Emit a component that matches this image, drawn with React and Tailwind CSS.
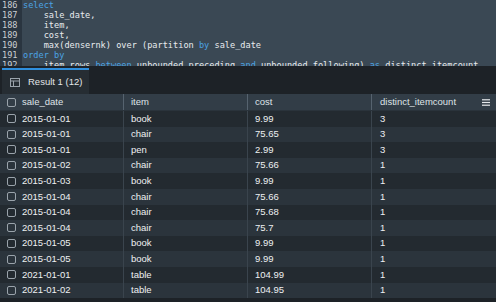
import React from 'react';

const code = [
  [186, [['k', 'select']]],
  [187, [['t', '    sale_date,']]],
  [188, [['t', '    item,']]],
  [189, [['t', '    cost,']]],
  [190, [['t', '    max(densernk) over (partition '], ['k', 'by'], ['t', ' sale_date']]],
  [191, [['k', 'order by']]],
  [192, [['t', '    item rows '], ['k', 'between'], ['t', ' unbounded preceding '], ['k', 'and'], ['t', ' unbounded following) '], ['k', 'as'], ['t', ' distinct_itemcount']]],
];

const rows = [
  ['2015-01-01', 'book', '9.99', '3'],
  ['2015-01-01', 'chair', '75.65', '3'],
  ['2015-01-01', 'pen', '2.99', '3'],
  ['2015-01-02', 'chair', '75.66', '1'],
  ['2015-01-03', 'book', '9.99', '1'],
  ['2015-01-04', 'chair', '75.66', '1'],
  ['2015-01-04', 'chair', '75.68', '1'],
  ['2015-01-04', 'chair', '75.7', '1'],
  ['2015-01-05', 'book', '9.99', '1'],
  ['2015-01-05', 'book', '9.99', '1'],
  ['2021-01-01', 'table', '104.99', '1'],
  ['2021-01-02', 'table', '104.95', '1'],
];

const Check = () => (
  <span className="w-[9px] h-[9px] rounded-[2px] border border-[#9aa3ab] shrink-0" />
);

export default function App() {
  return (
    <div className="w-[496px] h-[302px] overflow-hidden bg-[#1d2227] flex flex-col text-[#e6e9ec]" style={{ fontFamily: '"Liberation Sans", Arial, sans-serif' }}>
      {/* editor */}
      <div className="h-[66px] flex overflow-hidden bg-[#3a4854] shrink-0" style={{ fontFamily: '"DejaVu Sans Mono", monospace' }}>
        <div className="w-[22px] bg-[#2a3540] text-[#c9ced3] text-[8.6px] leading-[10px] pl-[2px] shrink-0">
          {code.map(([n]) => <div key={n}>{n}</div>)}
        </div>
        <div className="text-[8.6px] leading-[10px] pl-[1px] whitespace-pre text-[#e8ebee]">
          {code.map(([n, parts]) => (
            <div key={n}>
              {parts.map(([k, s], i) => (
                <span key={i} className={k === 'k' ? 'text-[#4ba3e3]' : ''}>{s}</span>
              ))}
            </div>
          ))}
        </div>
      </div>

      {/* result tabs */}
      <div className="h-[28px] flex shrink-0 bg-[#1d2227] pt-[2px]">
        <div className="w-[87px] ml-[2px] bg-[#262d33] border-t-2 border-[#2f8fdd] flex items-center gap-[8px] pl-[8px] text-[9.5px] text-[#e3e6e9]">
          <svg width="10" height="9" viewBox="0 0 10 9" fill="none" stroke="#9aa3ab" strokeWidth="1">
            <rect x="0.5" y="0.5" width="9" height="8" />
            <line x1="0.5" y1="3" x2="9.5" y2="3" />
            <line x1="3.5" y1="3" x2="3.5" y2="8.5" />
          </svg>
          <span>Result 1 (12)</span>
        </div>
      </div>

      {/* header */}
      <div className="h-[17px] flex shrink-0 bg-[#323d47] text-[9.5px] text-[#dfe3e7] border-b border-[#2a333b]">
        <div className="w-[124px] flex items-center gap-[6px] pl-[7px] border-r border-[#56636f]">
          <Check />
          <span>sale_date</span>
        </div>
        <div className="w-[124px] flex items-center pl-[7px] border-r border-[#56636f]">item</div>
        <div className="w-[124px] flex items-center pl-[7px] border-r border-[#56636f]">cost</div>
        <div className="flex-1 flex items-center justify-between pl-[8px] pr-[6px]">
          <span>distinct_itemcount</span>
          <svg width="8" height="7" viewBox="0 0 8 7" stroke="#e6e9ec" strokeWidth="1.2">
            <line x1="0" y1="0.8" x2="8" y2="0.8" />
            <line x1="0" y1="3.5" x2="8" y2="3.5" />
            <line x1="0" y1="6.2" x2="8" y2="6.2" />
          </svg>
        </div>
      </div>

      {/* rows */}
      <div className="flex flex-col text-[9.5px] text-[#eef0f2]">
        {rows.map((r, i) => (
          <div key={i} className={`h-[15.6px] flex ${i % 2 === 0 ? 'bg-[#232a30]' : 'bg-[#2b343c]'}`}>
            <div className="w-[124px] flex items-center gap-[6px] pl-[7px] border-r border-[#3a444d]">
              <Check />
              <span>{r[0]}</span>
            </div>
            <div className="w-[124px] flex items-center pl-[7px] border-r border-[#3a444d]">{r[1]}</div>
            <div className="w-[124px] flex items-center pl-[7px] border-r border-[#3a444d]">{r[2]}</div>
            <div className="flex-1 flex items-center pl-[8px]">{r[3]}</div>
          </div>
        ))}
      </div>
    </div>
  );
}
